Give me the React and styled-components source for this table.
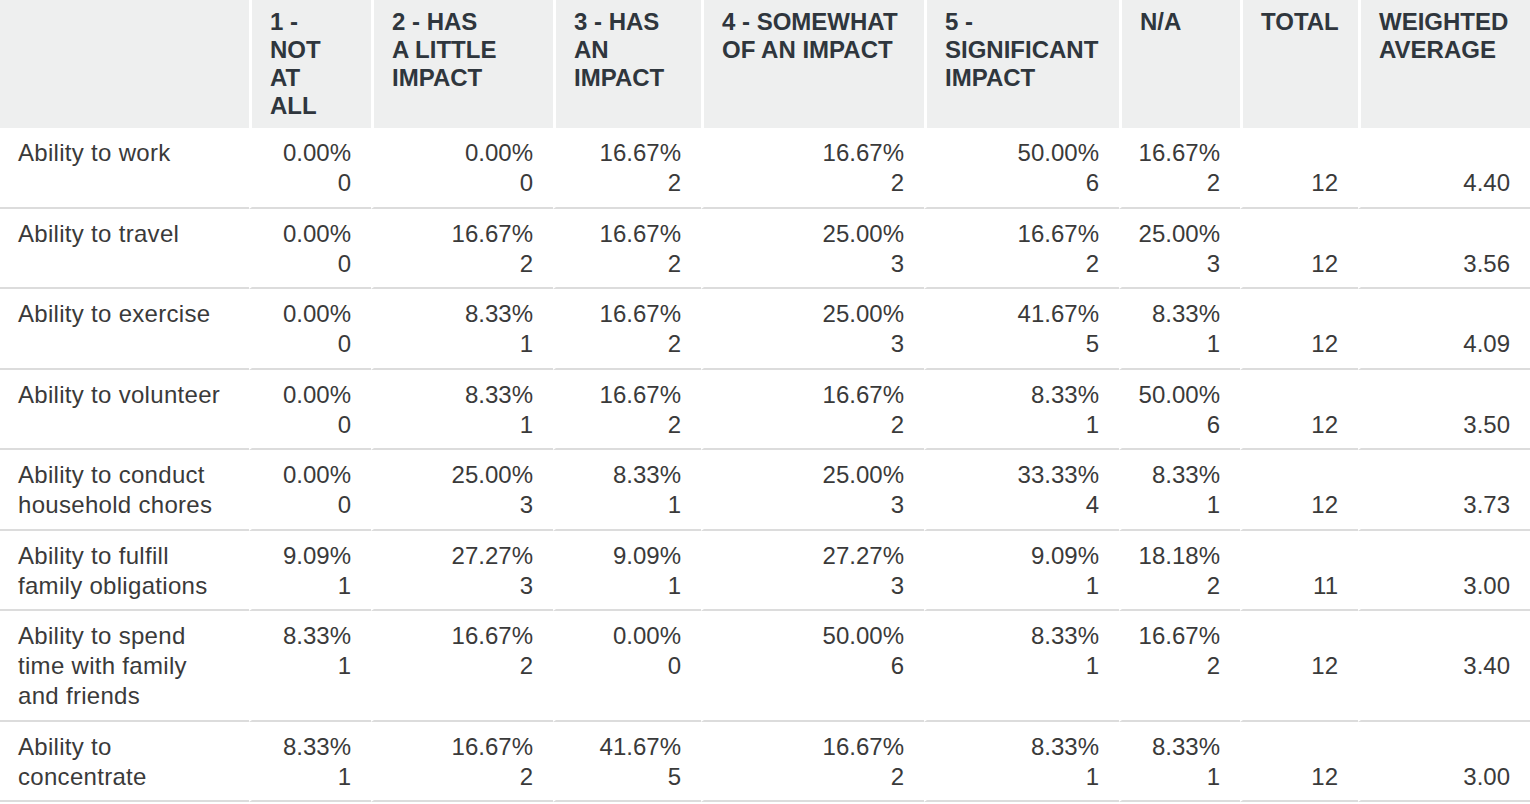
import React from "react";
import styled, { createGlobalStyle } from "styled-components";

const GlobalStyle = createGlobalStyle`
  *, *::before, *::after { box-sizing: border-box; }
  html, body { margin: 0; padding: 0; background: #ffffff; }
  body { font-family: "Liberation Sans", Arial, sans-serif; }
`;

const Table = styled.table`
  width: 1530px;
  table-layout: fixed;
  border-collapse: separate;
  border-spacing: 0;
  font-family: "Liberation Sans", Arial, sans-serif;
`;

const HeadCell = styled.th`
  background: #eeefef;
  color: #2f363d;
  font-size: 24px;
  font-weight: 700;
  line-height: 28px;
  text-align: left;
  vertical-align: top;
  text-transform: uppercase;
  padding: 8px 10px 8px 18px;
  height: 128px;
  border-left: ${(p) => (p.$first ? "0" : "3px solid #ffffff")};
`;

const LabelCell = styled.td`
  color: #3a3a3a;
  font-size: 24px;
  line-height: 30px;
  letter-spacing: 0.3px;
  text-align: left;
  vertical-align: top;
  padding: 10px 22px 8.5px 18px;
  border-bottom: 2px solid #dcdcdc;
`;

const ValueCell = styled.td`
  color: #3a3a3a;
  font-size: 24px;
  line-height: 30px;
  text-align: right;
  vertical-align: top;
  padding: 10px 20px 8.5px 10px;
  border-left: 3px solid #ffffff;
  border-bottom: 2px solid #dcdcdc;
`;

const Line = styled.div`
  white-space: nowrap;
`;

const widths = [249, 122, 182, 148, 223, 195, 121, 118, 172];

const headers = [
  [],
  ["1 -", "Not", "at", "all"],
  ["2 - Has", "a little", "impact"],
  ["3 - Has", "an", "impact"],
  ["4 - Somewhat", "of an impact"],
  ["5 -", "Significant", "impact"],
  ["N/A"],
  ["Total"],
  ["Weighted", "average"],
];

const rows = [
  ["Ability to work", [["0.00%", 0], ["0.00%", 0], ["16.67%", 2], ["16.67%", 2], ["50.00%", 6], ["16.67%", 2]], 12, "4.40"],
  ["Ability to travel", [["0.00%", 0], ["16.67%", 2], ["16.67%", 2], ["25.00%", 3], ["16.67%", 2], ["25.00%", 3]], 12, "3.56"],
  ["Ability to exercise", [["0.00%", 0], ["8.33%", 1], ["16.67%", 2], ["25.00%", 3], ["41.67%", 5], ["8.33%", 1]], 12, "4.09"],
  ["Ability to volunteer", [["0.00%", 0], ["8.33%", 1], ["16.67%", 2], ["16.67%", 2], ["8.33%", 1], ["50.00%", 6]], 12, "3.50"],
  ["Ability to conduct household chores", [["0.00%", 0], ["25.00%", 3], ["8.33%", 1], ["25.00%", 3], ["33.33%", 4], ["8.33%", 1]], 12, "3.73"],
  ["Ability to fulfill family obligations", [["9.09%", 1], ["27.27%", 3], ["9.09%", 1], ["27.27%", 3], ["9.09%", 1], ["18.18%", 2]], 11, "3.00"],
  ["Ability to spend time with family and friends", [["8.33%", 1], ["16.67%", 2], ["0.00%", 0], ["50.00%", 6], ["8.33%", 1], ["16.67%", 2]], 12, "3.40"],
  ["Ability to concentrate", [["8.33%", 1], ["16.67%", 2], ["41.67%", 5], ["16.67%", 2], ["8.33%", 1], ["8.33%", 1]], 12, "3.00"],
];

export default function App() {
  return (
    <>
      <GlobalStyle />
      <Table>
        <colgroup>
          {widths.map((w, i) => (
            <col key={i} style={{ width: w }} />
          ))}
        </colgroup>
        <thead>
          <tr>
            {headers.map((lines, i) => (
              <HeadCell key={i} $first={i === 0}>
                {lines.map((l, j) => (
                  <Line key={j}>{l}</Line>
                ))}
              </HeadCell>
            ))}
          </tr>
        </thead>
        <tbody>
          {rows.map(([label, cells, total, avg]) => (
            <tr key={label}>
              <LabelCell>{label}</LabelCell>
              {cells.map(([pct, n], i) => (
                <ValueCell key={i}>
                  <Line>{pct}</Line>
                  <Line>{n}</Line>
                </ValueCell>
              ))}
              <ValueCell>
                <Line>&nbsp;</Line>
                <Line>{total}</Line>
              </ValueCell>
              <ValueCell>
                <Line>&nbsp;</Line>
                <Line>{avg}</Line>
              </ValueCell>
            </tr>
          ))}
        </tbody>
      </Table>
    </>
  );
}
